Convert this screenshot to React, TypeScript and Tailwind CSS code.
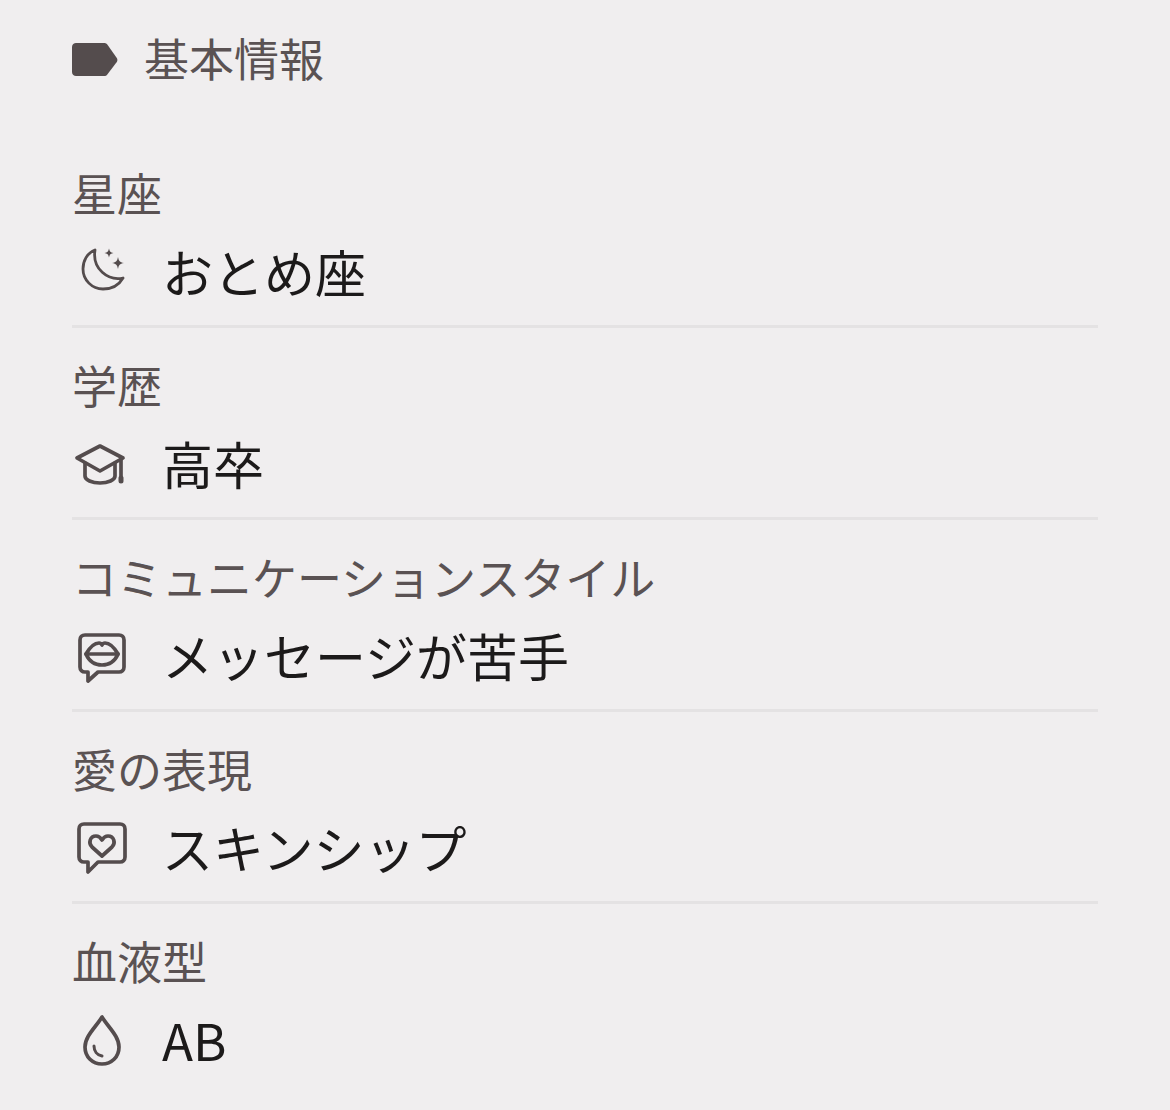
import React from "react";

const iconClass = "w-[56px] h-[56px] text-[#544c4d]";

const MoonIcon = () => (
  <svg viewBox="0 0 56 56" className={iconClass} fill="none" stroke="currentColor" strokeWidth="2.800">
    <path d="M21 5C13 8 9 16 9 24c0 11 9 20 20 20 9 0 16-4 20-11C34 36 18 24 21 5z" strokeLinejoin="round" />
    <path d="M35 3.500c.8 3.200 1.300 3.700 4.500 4.500-3.200.8-3.700 1.300-4.500 4.500-.8-3.200-1.300-3.700-4.500-4.500 3.200-.8 3.700-1.300 4.500-4.500zM44 12c1 4.500 1.500 5 6 6-4.500 1-5 1.500-6 6-1-4.500-1.500-5-6-6 4.500-1 5-1.500 6-6z" fill="currentColor" stroke="none" />
  </svg>
);

const CapIcon = () => (
  <svg viewBox="0 0 56 56" className={iconClass} fill="none" stroke="currentColor" strokeWidth="3.700" strokeLinejoin="round" strokeLinecap="round">
    <path d="M26 9L3 21l23 13 23-13z" />
    <path d="M11 26v13c0 4 7 7 15 7s15-3 15-7V26" />
    <path d="M47 23v16" />
    <path d="M47 41v3" strokeWidth="5" />
  </svg>
);

const LipsIcon = () => (
  <svg viewBox="0 0 56 56" className={iconClass} fill="none" stroke="currentColor" strokeWidth="3.700" strokeLinejoin="round" strokeLinecap="round">
    <path d="M11 6h34c3 0 5 2 5 5v27c0 3-2 5-5 5H24L14 52v-9h-3c-3 0-5-2-5-5V11c0-3 2-5 5-5z" />
    <path d="M12 25c4-7 9-11 13-11 1.500 0 2.500 1 3 2 .5-1 1.500-2 3-2 4 0 9 4 13 11-3 7-9 11-16 11s-13-4-16-11z" />
    <path d="M12 25h32" />
  </svg>
);

const HeartIcon = () => (
  <svg viewBox="0 0 56 56" className={iconClass} fill="none" stroke="currentColor" strokeWidth="3.700" strokeLinejoin="round" strokeLinecap="round">
    <path d="M10 3h36c3 0 5 2 5 5v28c0 3-2 5-5 5H24L14 51v-10h-4c-3 0-5-2-5-5V8c0-3 2-5 5-5z" />
    <path d="M28 35L18 26c-4-4-2-11 4-11 3 0 4.500 1.500 6 4 1.500-2.500 3-4 6-4 6 0 8 7 4 11z" />
  </svg>
);

const DropIcon = () => (
  <svg viewBox="0 0 56 56" className={iconClass} fill="none" stroke="currentColor" strokeWidth="3.700" strokeLinejoin="round" strokeLinecap="round">
    <path d="M28 4C22 14 11 23 11 34c0 10 7.500 17 17 17s17-7 17-17C45 23 34 14 28 4z" />
    <path d="M20 33c0 5 3 9 8 10" strokeWidth="3" />
  </svg>
);

const rows = [
  { label: "星座", value: "おとめ座", icon: <MoonIcon /> },
  { label: "学歴", value: "高卒", icon: <CapIcon /> },
  { label: "コミュニケーションスタイル", value: "メッセージが苦手", icon: <LipsIcon /> },
  { label: "愛の表現", value: "スキンシップ", icon: <HeartIcon /> },
  { label: "血液型", value: "AB", icon: <DropIcon /> },
];

export default function App() {
  return (
    <div
      className="w-[1170px] h-[1110px] overflow-hidden bg-[#f0eeef] px-[72px] pt-[30px]"
      style={{ fontFamily: '"Noto Sans CJK JP", "Noto Sans", sans-serif' }}
    >
      <div className="flex items-center h-[60px] mb-[77px]">
        <svg viewBox="0 0 46 34" className="w-[46px] h-[34px] text-[#544c4d]" fill="currentColor">
          <path d="M4 0h28c1.500 0 2.500.5 3.300 1.500l9.500 13.500c.8 1.200.8 2.800 0 4L35.300 31.500C34.500 32.500 33.500 33 32 33H4c-2 0-4-1.500-4-4V4c0-2.500 2-4 4-4z" />
        </svg>
        <h2 className="ml-[26px] pb-[4px] text-[45px] leading-[56px] font-normal text-[#5a5253]">基本情報</h2>
      </div>

      {rows.map((row, i) => (
        <div key={row.label} className={i < rows.length - 1 ? "border-b-[3px] border-[#e4e2e3] pb-[24px] mb-[31px]" : ""}>
          <div className="h-[56px] text-[45px] leading-[52px] text-[#5a5253]">{row.label}</div>
          <div className="flex items-center h-[56px] mt-[22px]">
            <div className="w-[60px] flex justify-center shrink-0">{row.icon}</div>
            <span className="ml-[30px] pb-[4px] text-[51px] leading-[52px] text-[#1c1a1a]">{row.value}</span>
          </div>
        </div>
      ))}
    </div>
  );
}
